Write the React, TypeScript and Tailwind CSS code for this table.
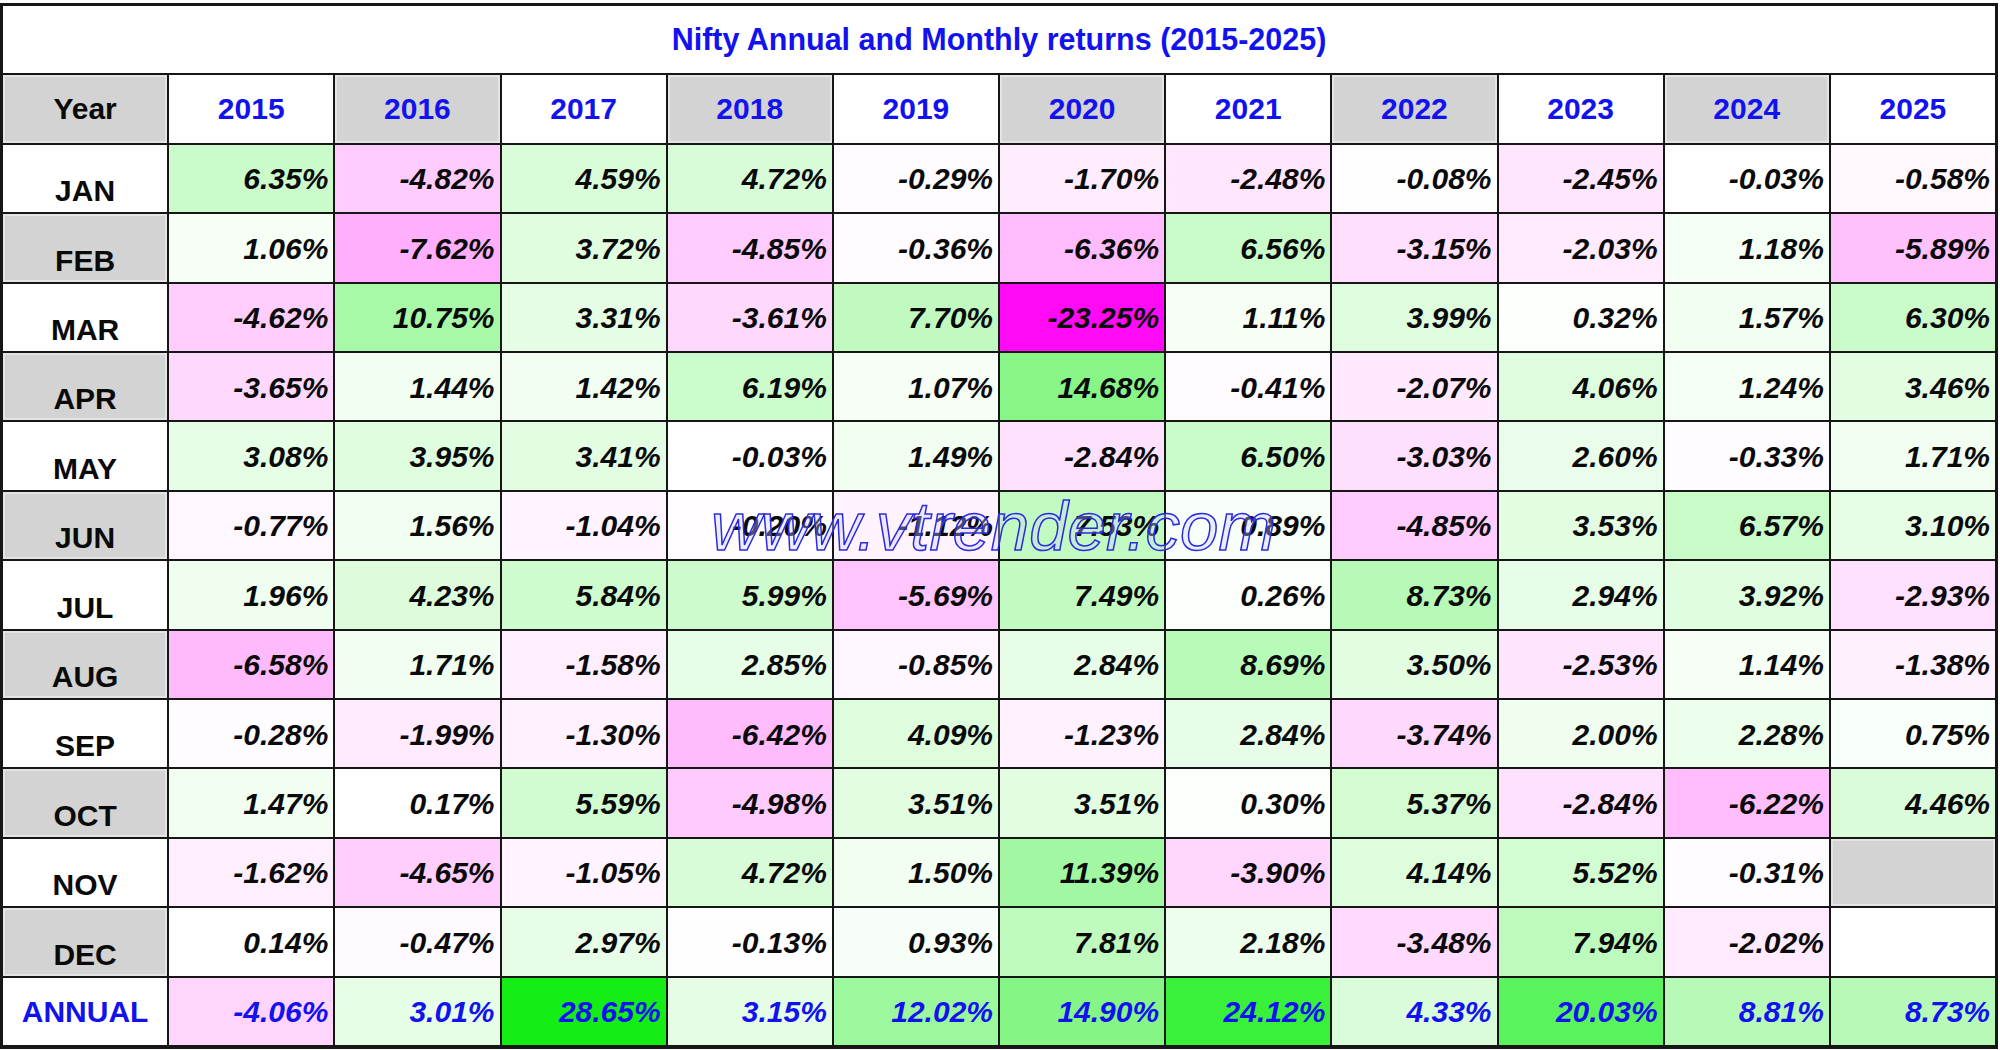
const years = [2015, 2016, 2017, 2018, 2019, 2020, 2021, 2022, 2023, 2024, 2025]

type Row = { label: string; values: (number | null)[] }

const rows: Row[] = [
  { label: "JAN", values: [6.35, -4.82, 4.59, 4.72, -0.29, -1.7, -2.48, -0.08, -2.45, -0.03, -0.58] },
  { label: "FEB", values: [1.06, -7.62, 3.72, -4.85, -0.36, -6.36, 6.56, -3.15, -2.03, 1.18, -5.89] },
  { label: "MAR", values: [-4.62, 10.75, 3.31, -3.61, 7.7, -23.25, 1.11, 3.99, 0.32, 1.57, 6.3] },
  { label: "APR", values: [-3.65, 1.44, 1.42, 6.19, 1.07, 14.68, -0.41, -2.07, 4.06, 1.24, 3.46] },
  { label: "MAY", values: [3.08, 3.95, 3.41, -0.03, 1.49, -2.84, 6.5, -3.03, 2.6, -0.33, 1.71] },
  { label: "JUN", values: [-0.77, 1.56, -1.04, -0.2, -1.12, 7.53, 0.89, -4.85, 3.53, 6.57, 3.1] },
  { label: "JUL", values: [1.96, 4.23, 5.84, 5.99, -5.69, 7.49, 0.26, 8.73, 2.94, 3.92, -2.93] },
  { label: "AUG", values: [-6.58, 1.71, -1.58, 2.85, -0.85, 2.84, 8.69, 3.5, -2.53, 1.14, -1.38] },
  { label: "SEP", values: [-0.28, -1.99, -1.3, -6.42, 4.09, -1.23, 2.84, -3.74, 2.0, 2.28, 0.75] },
  { label: "OCT", values: [1.47, 0.17, 5.59, -4.98, 3.51, 3.51, 0.3, 5.37, -2.84, -6.22, 4.46] },
  { label: "NOV", values: [-1.62, -4.65, -1.05, 4.72, 1.5, 11.39, -3.9, 4.14, 5.52, -0.31, null] },
  { label: "DEC", values: [0.14, -0.47, 2.97, -0.13, 0.93, 7.81, 2.18, -3.48, 7.94, -2.02, null] },
]

const annual = [-4.06, 3.01, 28.65, 3.15, 12.02, 14.9, 24.12, 4.33, 20.03, 8.81, 8.73]

const MAX = 28.65
const MIN = -23.25

// 3-colour scale: magenta -> white -> green, like the spreadsheet's conditional formatting
function cellColor(v: number) {
  const mix = (a: number, b: number, t: number) => Math.round(a + (b - a) * t)
  if (v >= 0) {
    const t = Math.min(v / MAX, 1)
    return `rgb(${mix(255, 20, t)}, ${mix(255, 238, t)}, ${mix(255, 20, t)})`
  }
  const t = Math.min(v / MIN, 1)
  return `rgb(255, ${mix(255, 10, t)}, ${mix(255, 245, t)})`
}

const fmt = (v: number) => `${v.toFixed(2)}%`

const grayCell = "bg-[#d3d3d3] shadow-[inset_0_0_0_2px_#e4e4e4]"

function ValueCell({ v, blue }: { v: number | null; blue?: boolean }) {
  if (v === null) return <div className="bg-white" />
  return (
    <div
      className={`flex items-center justify-end pr-[5px] pt-[2px] text-[30px] font-bold italic leading-none ${blue ? "text-[#1212ee]" : "text-[#0a0a0a]"}`}
      style={{ backgroundColor: cellColor(v) }}
    >
      {fmt(v)}
    </div>
  )
}

export default function App() {
  return (
    <div className="relative w-[2000px] h-[1050px] bg-white pt-[3px] font-['Liberation_Sans',Arial,sans-serif]">
      <div className="grid grid-cols-12 grid-rows-[repeat(15,minmax(0,1fr))] gap-[2px] w-[1998px] h-[1046px] bg-[#161616] border-[3px] border-b-[4px] border-[#161616]">
        {/* Title */}
        <div className="col-span-12 flex items-center justify-center bg-white text-[30.5px] font-bold leading-none text-[#1212ee]">
          Nifty Annual and Monthly returns (2015-2025)
        </div>

        {/* Header */}
        <div className={`flex items-center justify-center text-[30px] font-bold leading-none text-[#0a0a0a] ${grayCell}`}>
          Year
        </div>
        {years.map((y, i) => (
          <div
            key={y}
            className={`flex items-center justify-center text-[30px] font-bold leading-none text-[#1212ee] ${i % 2 === 1 ? grayCell : "bg-white"}`}
          >
            {y}
          </div>
        ))}

        {/* Months */}
        {rows.map((row, r) => (
          <div key={row.label} className="contents">
            <div
              className={`flex items-end justify-center pb-[6px] text-[30px] font-bold leading-none text-[#0a0a0a] ${r % 2 === 1 ? grayCell : "bg-white"}`}
            >
              {row.label}
            </div>
            {row.values.map((v, i) =>
              v === null && row.label === "NOV" ? (
                <div key={i} className={grayCell} />
              ) : (
                <ValueCell key={i} v={v} />
              )
            )}
          </div>
        ))}

        {/* Annual */}
        <div className="flex items-center justify-center pt-[2px] text-[30px] font-bold leading-none text-[#1212ee] bg-white">
          ANNUAL
        </div>
        {annual.map((v, i) => (
          <ValueCell key={i} v={v} blue />
        ))}
      </div>

      {/* Watermark */}
      <div className="pointer-events-none absolute left-[711px] top-[492px] text-[69px] italic leading-none text-[rgba(210,210,255,0.35)] [-webkit-text-stroke:1.5px_#2a2ae0]">
        www.vtrender.com
      </div>
    </div>
  )
}
